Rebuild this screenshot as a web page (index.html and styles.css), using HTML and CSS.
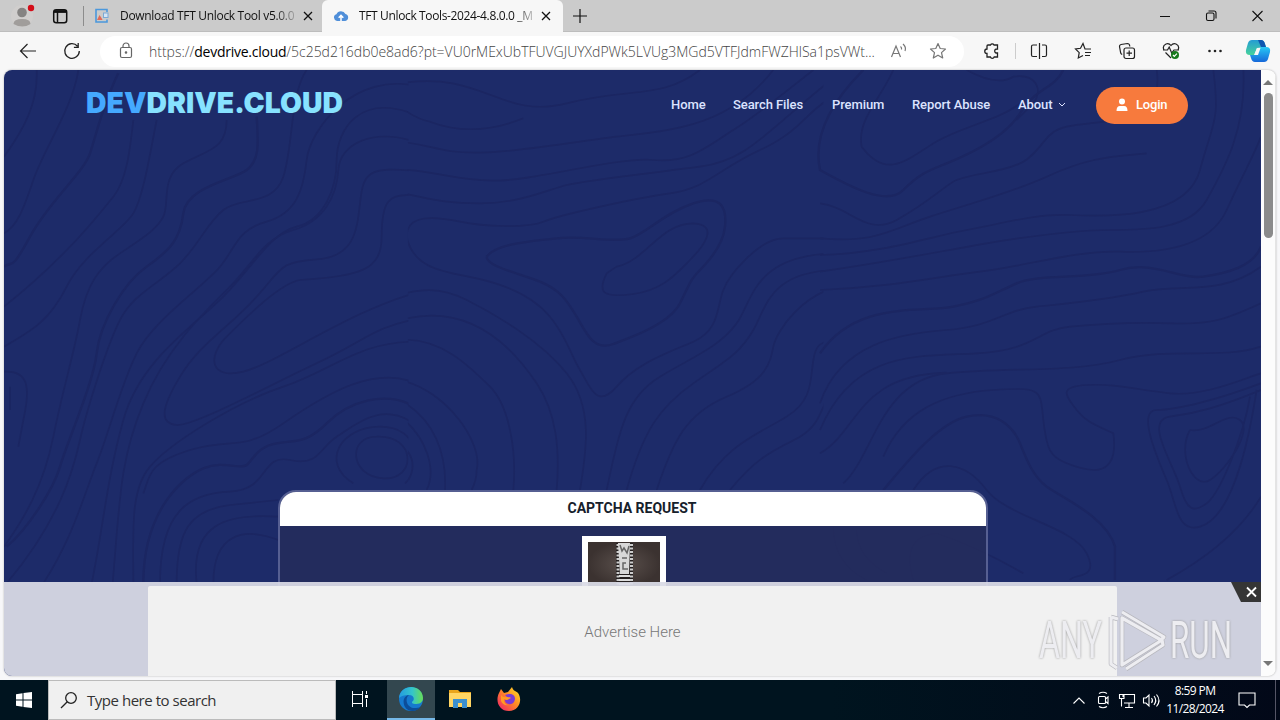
FILE: index.html
```html
<!DOCTYPE html>
<html lang="en">
<head>
<meta charset="utf-8">
<title>DevDrive.Cloud</title>
<link rel="stylesheet" href="styles.css">
</head>
<body>
<header class="tabs">
  <div class="profile"><svg width="84" height="32" viewBox="0 0 84 32"><circle cx="22" cy="16" r="11" fill="#d0cecd"/><circle cx="22" cy="12.500" r="4.800" fill="#858382"/><path d="M13.500 24q0-5 8.500-5t8.500 5q-8 5-17 0z" fill="#a09d9b"/><circle cx="31" cy="8" r="3.200" fill="#d40d19"/><rect x="53.700" y="9.700" width="13" height="13" rx="2.500" fill="none" stroke="#111" stroke-width="1.500"/><path d="M54 11.500h12.500" stroke="#111" stroke-width="2.800"/><path d="M57.500 12v10" stroke="#111" stroke-width="1.500"/><path d="M83.500 6v20" stroke="#8c8c8c"/></svg></div>
  <div class="tab"><svg width="16" height="16" viewBox="0 0 16 16"><path d="M13 4V1.500H2V14h11v-2.500" fill="none" stroke="#4b98dc" stroke-width="1.600"/><rect x="9.500" y="5" width="4.500" height="4.500" fill="#d4e5f5" stroke="#7ba9d5"/><path d="M3 12l2.500-5 2 3 1 2z" fill="#e26a56"/></svg><span class="title t1">Download TFT Unlock Tool v5.0.0</span><svg class="x" width="10" height="10" viewBox="0 0 10 10"><path d="M1 1l8 8M9 1L1 9" stroke="#111" stroke-width="1.300"/></svg></div>
  <div class="tab active"><svg width="16" height="16" viewBox="0 0 16 16"><path d="M4 13a3.500 3.500 0 0 1-.6-6.800A5 5 0 0 1 12.500 6a3.600 3.600 0 0 1-.2 7z" fill="#508fd9"/><path d="M8 13V8M5.700 9.800L8 7.400l2.300 2.400" stroke="#fff" stroke-width="1.500" fill="none"/></svg><span class="title t2">TFT Unlock Tools-2024-4.8.0.0 _M</span><svg class="x" width="10" height="10" viewBox="0 0 10 10"><path d="M1 1l8 8M9 1L1 9" stroke="#111" stroke-width="1.300"/></svg></div>
  <svg class="plus" width="14" height="14" viewBox="0 0 14 14"><path d="M7 0v14M0 7h14" stroke="#111" stroke-width="1.200"/></svg>
  <svg class="winctl" width="138" height="32" viewBox="0 0 138 32" fill="none" stroke="#111" stroke-width="1.100"><path d="M18 16.500h10M110.500 11l10 10M120.500 11l-10 10"/><rect x="64.500" y="13" width="7.500" height="7.500" rx="1.500"/><path d="M66.500 11h5.500q2 0 2 2v5.500"/></svg>
</header>
<div class="toolbar">
  <div class="slot"><svg width="18" height="16" viewBox="0 0 18 16" fill="none" stroke="#222" stroke-width="1.200"><path d="M17 8H1.500M8.500 1l-7 7 7 7"/></svg></div>
  <div class="slot"><svg width="18" height="18" viewBox="0 0 18 18" fill="none" stroke="#222" stroke-width="1.300"><path d="M14.500 4.200A7.300 7.300 0 1 0 16.300 9M15.200 1v4.300h-4.300"/></svg></div>
  <div class="address">
    <svg width="14" height="18" viewBox="0 0 14 18" fill="none" stroke="#666" stroke-width="1.200"><rect x="1.500" y="5.500" width="11" height="10" rx="1.500"/><path d="M4 5.500V4a3 3 0 0 1 6 0v1.500"/><circle cx="7" cy="10.500" r=".7" fill="#444"/></svg>
    <span class="url">https://<b>devdrive.cloud</b>/5c25d216db0e8ad6?pt=VU0rMExUbTFUVGJUYXdPWk5LVUg3MGd5VTFJdmFWZHlSa1psVWt...</span>
    <svg class="read" width="18" height="18" viewBox="0 0 18 18" fill="none" stroke="#777" stroke-width="1.200"><path d="M1.500 15L6 4 10.500 15M3.200 11.500h5.600M10.500 4.500q1.500 1.200 1 3M13 2q3.500 3 2 7"/></svg>
    <svg class="star" width="18" height="18" viewBox="0 0 18 18" fill="none" stroke="#777" stroke-width="1.200" stroke-linejoin="round"><path d="M9 1.500l2.200 5 5.300.5-4 3.600 1.200 5.400L9 13.200 4.300 16l1.200-5.400-4-3.600 5.300-.5z"/></svg>
  </div>
  <div class="slot ext"><svg width="18" height="18" viewBox="0 0 18 18" fill="none" stroke="#222" stroke-width="1.300"><path d="M5 3h2.500a2 2 0 0 1 3.500 0h3.500v4q-2.800-.2-2.800 2t2.800 2v4h-3.300a2 2 0 0 1-3.800 0H4v-3.500a2 2 0 0 1 0-4.500V4q0-1 1-1z"/></svg></div>
  <div class="divider"></div>
  <div class="slot"><svg width="18" height="18" viewBox="0 0 18 18" fill="none" stroke="#222" stroke-width="1.200"><path d="M7 3H3Q1.500 3 1.500 4.500v8.500Q1.500 14.500 3 14.500h4M9.500 1v16M12 3h3q1.500 0 1.500 1.500v8.500q0 1.500-1.500 1.500h-3"/></svg></div>
  <div class="slot"><svg width="18" height="18" viewBox="0 0 18 18" fill="none" stroke="#222" stroke-width="1.200"><path d="M17 7h-6L9 1.500 6.500 6.300 1.500 7l3.700 3.600L4.300 16 9 13.500M11 10.500h6M11 13.500h5"/></svg></div>
  <div class="slot"><svg width="18" height="18" viewBox="0 0 18 18" fill="none" stroke="#222" stroke-width="1.200"><rect x="6" y="6" width="10.500" height="10.500" rx="2"/><path d="M11.200 8.500v5.500M8.500 11.200H14M4.200 12.500Q3 12 2.700 11L1.500 4.500Q1.300 3 3 2.500l6.500-1q1.500 0 2 1.500l.3 1.500"/></svg></div>
  <div class="slot"><svg width="18" height="18" viewBox="0 0 18 18" fill="none" stroke="#222" stroke-width="1.200"><path d="M2 8q-2-4 2-6 3-1 5 1.500Q11 1 14 2q4 2 2 6M3.500 10.500L9 16M1 8h4.500l1.700-3 2.500 6L12 8h5"/><circle cx="13" cy="13" r="4" fill="#17791c" stroke="none"/><path d="M11 13l1.300 1.300 2.600-2.600" stroke="#fff"/></svg></div>
  <div class="slot"><svg width="16" height="16" viewBox="0 0 16 16"><g fill="#222"><circle cx="2.500" cy="8" r="1.300"/><circle cx="8" cy="8" r="1.300"/><circle cx="13.500" cy="8" r="1.300"/></g></svg></div>
  <div class="slot copilot"><svg width="26" height="24" viewBox="0 0 26 24"><defs><linearGradient id="ca" x2="0" y2="1"><stop stop-color="#259cd3"/><stop offset="1" stop-color="#46d29c"/></linearGradient><linearGradient id="cb" x2="0" y2="1"><stop stop-color="#27c8f5"/><stop offset="1" stop-color="#1668d9"/></linearGradient></defs><path d="M7 1h9q3 0 4 4l1 3-9 1-3 7H5Q0 16 1 11L3 4q1-3 4-3z" fill="url(#ca)"/><path d="M13 1h3q3 0 4 4l1 3-5 0z" fill="#0f55b0"/><path d="M17 8h4q5 0 4 5l-2 7q-1 3-4 3h-9q-3 0-4-4l-1-3h4q3 0 4-4 1-4 4-4z" fill="url(#cb)"/><path d="M12 9h3.500l-2.500 7H9.500z" fill="#f7f7f7"/></svg></div>
</div>
<main class="viewport">
  <div class="page">
    <svg class="contours" viewBox="4 70 1257 606" width="1257" height="606" fill="none" stroke="#1b2662" stroke-width="5">
      <defs><clipPath id="west"><path d="M0 0h1225v1600H0z"/></clipPath><clipPath id="mid"><path d="M24-200h1246v1400H24z"/></clipPath></defs>
      <g transform="translate(0 70) scale(.33333)" clip-path="url(#west)">
        <path d="M110 0C115 100 70 180 12 260M235 0C220 110 130 240 100 330S50 470 12 490M400 150C390 240 380 330 340 380S200 560 12 710M470 150C450 250 430 380 400 430S250 550 200 650 100 780 12 830"/>
        <path stroke-width="7" d="M355 10C310 100 290 190 270 250S150 390 90 500 40 570 12 590M770 140C775 220 780 270 740 300S560 350 550 430 510 540 440 590 300 760 290 850 200 1120 180 1190 80 1380 20 1430"/>
        <path d="M680 150C680 240 620 240 550 280S510 400 490 440 420 510 360 550 260 640 240 750 190 950 160 1100 70 1350 12 1430M920 0C870 70 880 230 850 320S720 380 670 420 600 520 540 580 400 670 360 750 260 1020 240 1110 180 1350 20 1540M1260 50C1060 0 930 180 920 270S890 430 800 455 710 530 660 590 460 750 410 850 330 1080 290 1180 220 1400 130 1540M1260 140C1080 60 1010 180 1010 270S970 450 890 470 760 590 670 680 420 870 370 1050 310 1370 275 1540"/>
        <path d="M1260 220C1120 170 1020 220 1015 300S970 455 880 480 760 580 690 650 500 830 430 1000 360 1280 338 1540M1260 305C1100 285 1090 310 1080 400S1060 560 950 568 850 590 770 680 600 820 540 920 480 1060 530 1065 800 950 950 880 1120 770 1260 745M1260 380C1160 360 1145 400 1145 500S1080 620 900 630C840 640 740 740 680 800S630 930 730 905 1050 720 1260 665M1260 815C1080 810 1000 900 850 950S510 1120 450 1190 400 1380 400 1540M1260 945C1130 880 980 970 850 1060S700 1100 570 1140 450 1220 430 1270"/>
        <path stroke-width="7" d="M430 1540C430 1320 550 1220 610 1195S720 1200 740 1185 770 1130 830 1120 920 1120 980 1060 1160 950 1260 1020"/>
        <path d="M12 905C90 900 90 960 70 1050L55 1130M30 950v70M480 1540C480 1320 570 1270 690 1265S780 1150 870 1170 960 1130 1010 1100 1150 980 1260 1075M530 1540C530 1380 570 1320 690 1305L835 1290M590 1540C570 1360 680 1330 835 1340M640 1540C640 1390 730 1370 835 1410M1060 1240C960 1180 1020 1070 1140 1070S1270 1190 1215 1240M1130 1100c120-5 120 130 20 125s-110-125-20-125"/>
      </g>
      <g transform="translate(400 120) scale(.33333)" clip-path="url(#mid)">
        <path d="M0-110C250-150 300 0 500-50S780-60 900-150M0 65C100 75 120 100 240 98S560 60 650 50 850 30 940-10 1080-100 1120-150M0 148C120 155 160 180 280 182S650 110 760 120 920 80 1000 30 1150-80 1240-150M0 218C90 235 120 250 240 250S440 210 500 195 750 160 900 140 1100 30 1330-150M20-25Q60 0 90 5q130 50 280-10"/>
        <path d="M20 350C20 280 110 290 180 305S380 325 430 305 700 235 810 220 950 150 1080 90 1220-30 1300-70M20 350C40 450 140 455 230 475S400 530 450 590 510 700 540 750 590 870 650 800 800 700 880 665 950 560 970 510 1080 355 1150 355H1320M650 440C740 420 780 310 880 310 960 315 910 380 870 420S790 510 700 522 590 520 620 460L650 440"/>
        <path stroke-width="7" d="M260 410C290 370 390 365 470 355S640 370 690 355 790 280 880 250 980 270 975 320 930 420 900 450 870 490 840 550 700 650 640 672 560 640 530 590 480 510 420 485 260 440 260 410"/>
        <path d="M-20 530C60 505 120 500 200 540S420 660 500 760 560 990 540 1110M0 600C220 540 350 700 410 790S480 990 470 1110M0 660C120 650 210 740 270 800S350 1000 340 1110M0 780C140 810 250 970 230 1050Q230 1080 215 1110M-20 830C110 890 140 1010 135 1110M0 890C80 950 110 1050 80 1110M0 970q60 50 25 110M620 1110C660 920 680 830 780 770S960 680 1010 610 1060 400 1320 400M680 1110C730 930 780 860 880 790S1020 700 1060 630 1110 450 1320 450M770 1110C820 960 860 880 980 830S1110 730 1120 680 1210 520 1320 500"/>
        <path d="M900 1110C980 970 1080 940 1160 890S1230 780 1240 720 1270 670 1320 650M990 1110C1080 1000 1130 990 1200 950S1260 850 1320 770"/>
      </g>
      <g transform="translate(820 70) scale(.33333)">
        <path stroke-width="7" d="M130 0Q-30 160 0 300C90 350 200 410 250 360S330 300 380 280 550 210 600 130 700 60 730 0M190 1260C250 1190 350 1060 440 1040S580 1070 600 1120 640 1220 680 1250 860 1340 885 1430V1530M0 850C110 690 300 730 400 710S520 670 590 640 800 630 900 600 1080 630 1150 620 1300 590 1323 530"/>
        <path d="M220 0C180 90 110 150 125 230 200 330 260 270 340 220S540 150 600 100M440 0q90 50 140 20c70-10 90 40 60 80L590 150M0 400C90 410 140 500 230 450S360 360 400 335 550 310 610 275 670 185 740 170 900 160 990 120Q1020 60 1010 0M0 505C170 520 210 480 330 440S570 370 680 320 850 260 980 250M0 555C190 550 330 500 440 480S650 430 750 435 1100 450 1140 300 1200 160 1180 0M0 605C240 570 380 540 500 520S770 480 870 480 1110 480 1160 390 1280 180 1270 0M0 660C230 650 350 620 480 605S770 540 900 545 1170 530 1220 420 1300 260 1323 200M0 1000C60 820 240 790 380 780S550 720 650 710 860 690 970 665 1200 680 1323 590M0 1080C100 840 290 860 470 850S650 780 750 770 930 755 1060 760 1230 740 1323 700M0 1150C120 1080 110 915 380 908M70 1240C160 1160 180 930 380 910S750 910 900 870 1200 870 1323 830"/>
        <path d="M190 1160C250 1020 370 970 520 960S660 960 670 1050 690 1160 740 1180 900 1240 880 1090C840 1070 800 1060 770 1020S710 950 800 945 950 960 1050 970 1260 930 1323 910M1323 940C1190 990 1070 1020 1010 1020S1010 1160 1040 1230 1070 1390 1140 1370 1270 1220 1310 960M1323 960C1200 1010 1130 1030 1050 1040S1060 1180 1080 1250 1120 1330 1160 1300 1270 1100 1290 980M1110 1080C1170 1090 1220 1020 1260 1050S1220 1200 1170 1230 1070 1150 1110 1080M280 1260C350 1150 440 1180 500 1260S760 1370 800 1450 760 1510 750 1530M40 1370q0 110 100 160M110 1380Q110 1460 200 1510M280 1530Q240 1400 350 1390C440 1420 540 1470 610 1510M1040 1530Q1240 1420 1323 1280"/>
      </g>
    </svg>
    <nav class="nav">
      <svg class="logo" width="262" height="32" viewBox="0 0 262 32"><text x="0" y="24" textLength="257" lengthAdjust="spacingAndGlyphs"><tspan fill="#45a9ff">DEV</tspan><tspan fill="#87e2ff">DRIVE.CLOUD</tspan></text></svg>
      <div class="links"><a class="n1">Home</a><a class="n2">Search Files</a><a class="n3">Premium</a><a class="n4">Report Abuse</a><a class="n5">About</a><svg width="8" height="6" viewBox="0 0 8 6"><path d="M1 1l3 3 3-3" fill="none" stroke="#dce3ff"/></svg></div>
      <button class="login"><svg width="12" height="14" viewBox="0 0 12 14" fill="#fff"><circle cx="6" cy="3.500" r="3"/><path d="M.5 13q0-5 3.500-5h4q3.500 0 3.500 5z"/></svg><span>Login</span></button>
    </nav>
    <section class="card">
      <h1>CAPTCHA REQUEST</h1>
      <div class="body"><svg class="zip" width="84" height="50" viewBox="0 0 84 50"><defs><radialGradient id="lg"><stop stop-color="#5a504c"/><stop offset="1" stop-color="#3b3230"/></radialGradient></defs><path fill="#fff" d="M0 0h84v50H0z"/><path fill="url(#lg)" d="M6 6h72v44H6z"/><path fill="#252020" d="M34 7h17v43H34z"/><path d="M36 8v42M49.500 8v42" stroke="#ccc" stroke-width="3" stroke-dasharray="2 1.500"/><path fill="#d8d8d8" d="M36 7h12l-1 31h-9z"/><path d="M38 9l2 6 2-3 3 5 2-7M40 22h5M44 27h-3v6h5" stroke="#666" fill="none" stroke-width="1.500"/><path d="M37 40h11M37 44h11M37 48h11" stroke="#ddd" stroke-width="2"/></svg></div>
    </section>
    <aside class="ad">
      <div class="banner">Advertise Here</div>
      <svg class="close" width="30" height="20" viewBox="0 0 30 20"><path d="M0 0h30v20H10z" fill="#353535"/><path d="M16 5.500l9 9M25 5.500l-9 9" stroke="#fff" stroke-width="1.800"/></svg>
      <svg class="mark" width="220" height="70" viewBox="1030 606 220 70"><g class="marktext"><text x="1039" y="658" textLength="63" lengthAdjust="spacingAndGlyphs">ANY</text><text x="1170" y="658" textLength="62" lengthAdjust="spacingAndGlyphs">RUN</text></g><g fill="none" stroke-linejoin="round"><path d="M1111 617v47l6 4M1111 617l7 2M1122 612l42 25-3 3-39-22v42M1126 669l37-24-1-5-40 25v-45" stroke="#b8b8be" stroke-width="4.500"/><path d="M1111 617v47l6 4M1111 617l7 2M1122 612l42 25-3 3-39-22v42M1126 669l37-24-1-5-40 25v-45" stroke="#ededf1" stroke-width="3.200"/></g></svg>
    </aside>
  </div>
  <div class="scroll"><i class="up"></i><b></b><i class="down"></i></div>
</main>
<footer class="taskbar">
  <div class="start"><svg width="16" height="16" viewBox="0 0 16 16" fill="#fff"><path d="M0 2.200l6.500-1v6.300H0zM7.500 1L16 0v7.500H7.500zM0 8.500h6.500v6.300l-6.500-1zM7.500 8.500H16V16l-8.500-1z"/></svg></div>
  <div class="search"><svg width="18" height="18" viewBox="0 0 18 18" fill="none" stroke="#222" stroke-width="1.300"><circle cx="11" cy="7" r="5.300"/><path d="M7.300 10.700L1 17"/></svg><span>Type here to search</span></div>
  <div class="cell"><svg width="16" height="16" viewBox="0 0 16 16" fill="none" stroke="#fff"><path d="M.5 0v3.500h10V0M.5 16v-3.500h10V16M.5 3.500h10v9H.5zM14.500 0v3M14.500 8v8"/><path d="M13 4h3v3h-3z" fill="#fff" stroke="none"/></svg></div>
  <div class="cell edge"><svg width="26" height="26" viewBox="0 0 26 26"><defs><linearGradient id="e1"><stop stop-color="#249be0"/><stop offset=".55" stop-color="#34c5cb"/><stop offset="1" stop-color="#69dd55"/></linearGradient></defs><circle cx="13" cy="13" r="12" fill="#1679ce"/><path d="M1 12C2-2 24-3 25 12c0 5-4 6-8 6-3 0-4-2-2-3 2-3 0-6-4-6-5 0-8 1-10 3z" fill="url(#e1)"/><path d="M11 9c-5 4-2 14 7 13 3 0 4-1 5-2-4 7-13 6-16 1-3-6-1-11 4-12z" fill="#0c4d99"/></svg></div>
  <div class="cell"><svg width="24" height="22" viewBox="0 0 24 22"><path d="M1 2h9l2 2h11v3H1z" fill="#e9a51c"/><path d="M1 5h22v14H1z" fill="#ffd563"/><path d="M5 20v-9h14v9h-5v-5h-4v5z" fill="#3b8fce"/></svg></div>
  <div class="cell ff"><svg width="26" height="26" viewBox="0 0 26 26"><defs><linearGradient id="f1" x1="1" x2="0" y2="1"><stop stop-color="#ffe62a"/><stop offset=".45" stop-color="#ff8b24"/><stop offset="1" stop-color="#f0186f"/></linearGradient></defs><path d="M5 3l3 4 4-1 4-5c1 4 4 4 6 6 5 7 1 18-9 18S-1 15 3 7z" fill="url(#f1)"/><path d="M9 9c8-3 12 2 9 7-3 4-9 2-9-2l4-1z" fill="#793bd5"/><path d="M5 9q2 3 6 2 3 0 4 1-2 1-4 2l-3-1q0 6 5 6-6 1-8-4z" fill="#ff9c24"/></svg></div>
  <div class="tray">
    <svg width="100" height="24" viewBox="1070 688 100 24" fill="none" stroke="#fff" stroke-width="1.100"><path d="M1073.500 703.500l5.500-5.500 5.500 5.500"/><rect x="1098.500" y="696.500" width="7" height="7" rx="1"/><path d="M1105.500 699l2.500-2v6.500l-2.500-2M1099 693.500q4-2.500 8 0M1099 706.500q4 2.500 8 0M1123 697v-2.500h11.500v8.500H1124M1129 703v4M1125 707.500h8M1119.500 694.500h4.500v4h-4.500zM1121.500 698.500v8M1143.500 698v5h2.500l3 3v-11l-3 3zM1151.500 698q2 2.500 0 5M1154 696q3.500 4.500 0 9M1156.500 694.500q5 6 0 12"/></svg>
    <div class="clock"><span>8:59 PM</span><span>11/28/2024</span></div>
    <svg class="note" width="18" height="18" viewBox="0 0 18 18" fill="none" stroke="#fff" stroke-width="1.100"><path d="M1 2h16v12h-5.500L9 16.500 6.500 14H1z"/></svg><i></i>
  </div>
</footer>
</body>
</html>
```
FILE: styles.css
```css
*{box-sizing:border-box}
body{margin:0;width:1280px;height:720px;overflow:hidden;background:#f7f7f9;display:flex;flex-direction:column;font-family:"Open Sans","Noto Sans",sans-serif;color:#111}
svg{display:block;flex:none}
.tabs{height:32px;background:#cbcbcb;display:flex;align-items:center;border-bottom:1px solid #bdbdbd;flex:none}
.profile{width:84px}
.tab{width:238px;height:32px;display:flex;align-items:center;padding-left:10px;font-size:12px}
.tab.active{width:241px;background:#f7f7f7;border-radius:6px 6px 0 0;padding-left:11px}
.title{width:176px;margin-left:10px;white-space:nowrap;overflow:hidden;mask-image:linear-gradient(90deg,#000 155px,transparent 180px)}
.t1{letter-spacing:-.32px}
.t2{letter-spacing:-.36px}
.x{margin-left:7px}
.active .x{margin-left:6px}
.plus{margin-left:10px}
.winctl{margin-left:auto}
.toolbar{height:38px;background:#f7f7f7;display:flex;align-items:center;padding-left:6px;flex:none}
.slot{width:44px;display:flex;justify-content:center;flex:none}
.address{width:864px;height:31px;margin-left:6px;background:#fff;border-radius:16px;display:flex;align-items:center;padding-left:19px;flex:none}
.url{width:732px;margin-left:16px;font-size:14px;font-weight:300;color:#444;white-space:nowrap;overflow:hidden;letter-spacing:-.02px}
.url b{font-weight:400;color:#000;letter-spacing:-.25px}
.read{margin-left:9px}
.star{margin-left:21px}
.ext{margin-left:6px}
.divider{width:1px;height:16px;background:#ccc;margin:0 1px}
.copilot{width:42px}
.viewport{height:606px;margin:0 4px;display:flex;border-radius:8px;overflow:hidden;background:#fcfcfc;box-shadow:0 0 2px #aaa;flex:none}
.page{width:1257px;position:relative;background:#1d2b69;overflow:hidden;display:flex;flex-direction:column;align-items:center}
.contours{position:absolute;inset:0}
.nav{position:relative;width:100%;height:70px;display:flex;padding:17px 73px 0 82px;font-family:Roboto,sans-serif;flex:none}
.logo{font:900 29px Inter,sans-serif;margin-top:2px;overflow:visible}
.links{display:flex;margin-left:323px;height:35px;align-items:center;font-size:13px;font-weight:500;color:#dce3ff;white-space:nowrap;letter-spacing:-.08px}
.n1{width:62px}.n2{width:99px}.n3{width:80px}.n4{width:106px}.n5{width:40px}
.login{width:92px;height:37px;margin-left:auto;border:0;border-radius:19px;background:#f77a3d;color:#fff;display:flex;align-items:center;gap:8px;padding:0 0 2px 20px;font:500 13px Roboto,sans-serif;letter-spacing:-.2px}
.card{position:relative;width:710px;height:220px;margin:350px 0 0 1px;border:2px solid #565f92;border-radius:18px;overflow:hidden;background:#252d5cd9;flex:none}
.card h1{margin:0;height:34px;background:#fff;text-align:center;font:700 14px/33px Roboto,sans-serif;color:#16202b;padding-right:2px}
.body{padding:10px 0 0 302px}
.ad{position:absolute;left:0;right:0;bottom:0;height:94px;background:rgba(218,219,230,.94);display:flex;justify-content:center;padding-top:4px}
.banner{width:969px;background:#f1f1f1;text-align:center;font:300 15px/92px Roboto,sans-serif;color:#777;border-radius:2px 2px 0 0}
.close{position:absolute;right:0;top:0}
.mark{position:absolute;right:11px;top:24px;overflow:visible}
.marktext{font:400 51px Roboto,sans-serif;fill:#ededf1;filter:drop-shadow(0 0 1px #999)}
.scroll{width:15px;display:flex;flex-direction:column;align-items:center;padding:10px 0;border-right:1px solid #e4e4e4}
.scroll b{width:9px;height:145px;border-radius:5px;background:#8b8b8b;margin-top:8px}
.up,.down{border:5px solid transparent;border-top:0;border-bottom:5px solid #777}
.down{margin-top:auto;border-bottom:0;border-top:5px solid #777}
.taskbar{height:40px;margin-top:4px;background:linear-gradient(90deg,#00141f 65%,#020818);display:flex;color:#fff;flex:none}
.start{width:48px;display:flex;align-items:center;justify-content:center}
.search{width:288px;background:#f0f0f0;border:1px solid #bbb;display:flex;align-items:center;padding-left:11px;color:#333;font-size:15px}
.search span{margin-left:9px;letter-spacing:-.47px}
.cell{width:48px;display:flex;align-items:center;justify-content:center;border-bottom:2px solid transparent}
.edge{background:#33474f;border-color:#76b9e8;margin:0 1px 0 3px}
.ff{margin-left:1px}
.tray{margin-left:auto;display:flex;align-items:center}
.clock{width:58px;margin-left:-4px;display:flex;flex-direction:column;text-align:center;font-size:12px;line-height:18px;letter-spacing:-.6px;white-space:nowrap}
.note{margin:0 19px 0 14px}
.tray i{width:1px;height:40px;background:#556;margin-right:4px}
```
